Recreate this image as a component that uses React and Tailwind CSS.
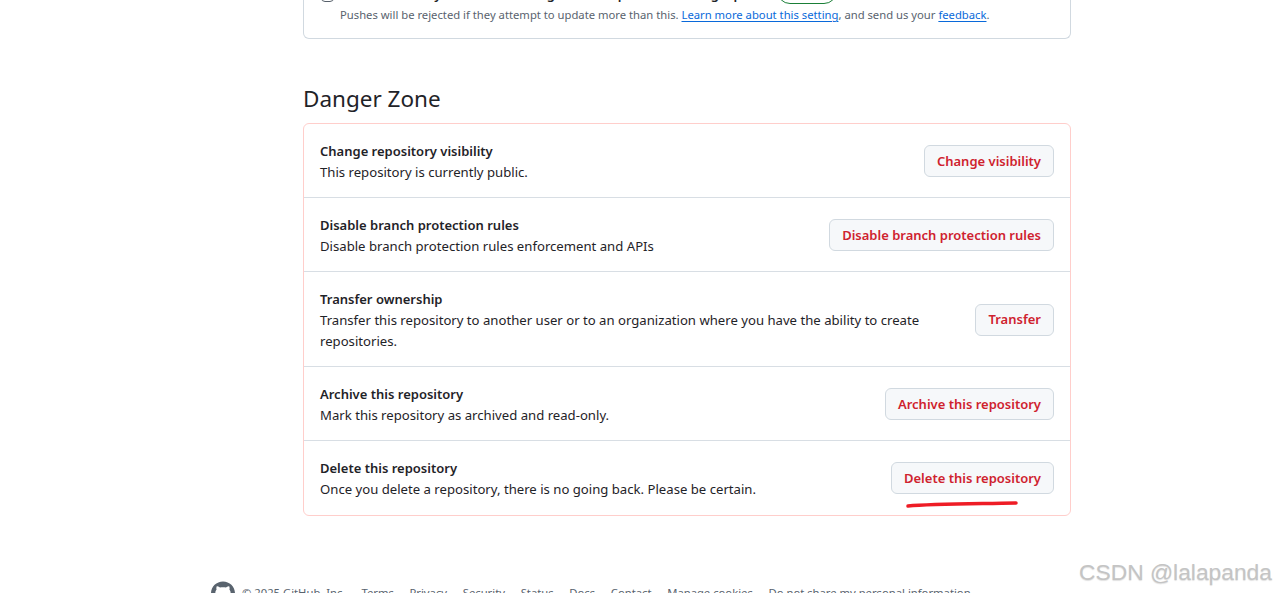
const FONT = "font-['Noto_Sans','Open_Sans',sans-serif]";

function Row({ title, desc, button, last }) {
  return (
    <div className={`flex items-center justify-between gap-12 pl-4 pr-4 pt-[17px] ${last ? "pb-[15px]" : "pb-[14px] border-b border-[#d8dee4]"}`}>
      <div className="flex-1 min-w-0">
        <div className="text-[13px] leading-[21px] font-semibold text-[#1f2328]">{title}</div>
        <div className="text-[13.15px] leading-[21px] text-[#1f2328]">{desc}</div>
      </div>
      <button className="shrink-0 h-8 -mt-0.5 px-3 pt-px rounded-md border border-[#d1d9e0] bg-[#f6f8fa] text-[13px] font-semibold text-[#cf222e]">
        {button}
      </button>
    </div>
  );
}

const footerLinks = ["Terms", "Privacy", "Security", "Status", "Docs", "Contact", "Manage cookies", "Do not share my personal information"];

export default function App() {
  return (
    <div className={`relative h-[593px] w-[1275px] overflow-hidden bg-white ${FONT}`}>
      <div className="ml-[303px] w-[768px]">
        <div className="mt-[-22px] h-[61px] rounded-b-md border border-t-0 border-[#d1d9e0] pl-4 pr-4">
          <div className="flex items-center h-[26px]">
            <div className="h-[13px] w-[13px] rounded-sm border border-[#57606a] shrink-0 mt-[8px] ml-px" />
            <span className="ml-[6px] mt-[6px] text-[13px] leading-[20px] font-semibold text-[#1f2328] whitespace-nowrap">Limit how many branches and tags can be updated in a single push</span>
            <span className="ml-[12px] h-[26px] w-[60px] shrink-0 rounded-full border border-[#1a7f37]" />
          </div>
          <div className="pl-5 text-[11.25px] leading-[18px] mt-[2px] text-[#59636e] whitespace-nowrap">
            Pushes will be rejected if they attempt to update more than this.{" "}
            <a className="text-[#0969da] underline underline-offset-2">Learn more about this setting</a>, and send us your{" "}
            <a className="text-[#0969da] underline underline-offset-2">feedback</a>.
          </div>
        </div>

        <h2 className="mt-[45px] text-[22.5px] leading-[30px] font-normal text-[#1f2328]">Danger Zone</h2>

        <div className="mt-[9px] rounded-md border border-[#ffcecb]">
          <Row title="Change repository visibility" desc="This repository is currently public." button="Change visibility" />
          <Row title="Disable branch protection rules" desc="Disable branch protection rules enforcement and APIs" button="Disable branch protection rules" />
          <Row title="Transfer ownership" desc="Transfer this repository to another user or to an organization where you have the ability to create repositories." button="Transfer" />
          <Row title="Archive this repository" desc="Mark this repository as archived and read-only." button="Archive this repository" />
          <Row title="Delete this repository" desc="Once you delete a repository, there is no going back. Please be certain." button="Delete this repository" last />
        </div>
      </div>

      <div className="ml-[211px] mt-[65px] flex items-start text-[11.25px] leading-[18px] text-[#59636e]">
        <svg viewBox="0 0 24 24" className="h-6 w-6 fill-[#59636e] shrink-0">
          <path d="M12 .5C5.37.5 0 5.78 0 12.292c0 5.211 3.438 9.63 8.205 11.188.6.111.82-.254.82-.567 0-.28-.01-1.022-.015-2.005-3.338.711-4.042-1.582-4.042-1.582-.546-1.361-1.335-1.725-1.335-1.725-1.087-.731.084-.716.084-.716 1.205.082 1.838 1.215 1.838 1.215 1.07 1.803 2.809 1.282 3.495.981.108-.763.417-1.282.76-1.577-2.665-.295-5.466-1.309-5.466-5.827 0-1.287.465-2.339 1.235-3.164-.135-.298-.54-1.497.105-3.121 0 0 1.005-.316 3.3 1.209.96-.262 1.98-.392 3-.398 1.02.006 2.04.136 3 .398 2.28-1.525 3.285-1.209 3.285-1.209.645 1.624.24 2.823.12 3.121.765.825 1.23 1.877 1.23 3.164 0 4.53-2.805 5.527-5.475 5.817.42.354.81 1.077.81 2.182 0 1.578-.015 2.846-.015 3.229 0 .309.21.678.825.56C20.565 21.917 24 17.495 24 12.292 24 5.78 18.627.5 12 .5z" />
        </svg>
        <span className="ml-[7px] mt-[3px] whitespace-nowrap">© 2025 GitHub, Inc.</span>
        <div className="ml-[16px] mt-[3px] flex gap-[15.7px] whitespace-nowrap">
          {footerLinks.map((l) => <span key={l}>{l}</span>)}
        </div>
      </div>

      <svg className="absolute left-[900px] top-[495px]" width="125" height="18" viewBox="0 0 125 18">
        <path d="M8 11 C 30 9, 60 9, 116 8" stroke="#ee1c25" strokeWidth="3.5" strokeLinecap="round" fill="none" />
      </svg>

      <div className="absolute left-[1079px] top-[557px] text-[22.8px] leading-[30px] whitespace-nowrap font-['Liberation_Sans',sans-serif] text-[#c4c4c4] [text-shadow:0_1px_1px_rgba(0,0,0,0.12)]">
        CSDN @lalapanda
      </div>
    </div>
  );
}
